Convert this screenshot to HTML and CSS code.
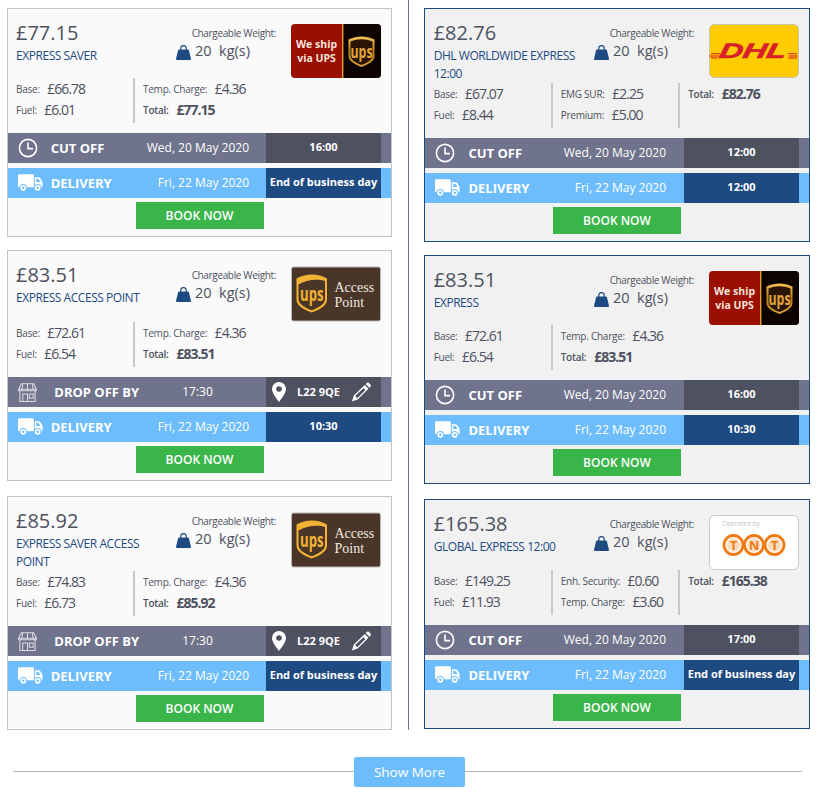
FILE: index.html
```html
<!DOCTYPE html>
<html lang="en">
<head>
<meta charset="utf-8">
<title>Quotes</title>
<link rel="stylesheet" href="styles.css">
</head>
<body>
<svg class="defs" aria-hidden="true">
  <defs>
    <linearGradient id="gold" x1="0" y1="0" x2="0" y2="1"><stop offset="0" stop-color="#f3c25a"/><stop offset=".5" stop-color="#b97a16"/><stop offset="1" stop-color="#e0a63c"/></linearGradient>
    <symbol id="i-clock" viewBox="0 0 20 20"><circle cx="10" cy="10" r="8.6" fill="none" stroke="#fff" stroke-width="1.6"/><path d="M10 4.5V10.6H15" fill="none" stroke="#fff" stroke-width="1.6"/></symbol>
    <symbol id="i-truck" viewBox="0 0 26 18"><path d="M1.5 0H15a1.5 1.5 0 0 1 1.5 1.5V13.5H1.5A1.500 1.500 0 0 1 0 12V1.500A1.500 1.500 0 0 1 1.500 0Z" fill="#fff"/><path d="M17.500 3H21.500Q22.500 3 23 3.800L25.500 7.500V13.500H17.500Z" fill="#fff"/><path d="M19 4.500H21L23.600 8H19Z" fill="#6dbdfd"/><circle cx="5.500" cy="14" r="3.900" fill="#6dbdfd"/><circle cx="5.500" cy="14" r="3" fill="#fff"/><circle cx="5.500" cy="14" r="1.300" fill="#6dbdfd"/><circle cx="20.500" cy="14" r="3.900" fill="#6dbdfd"/><circle cx="20.500" cy="14" r="3" fill="#fff"/><circle cx="20.500" cy="14" r="1.300" fill="#6dbdfd"/></symbol>
    <symbol id="i-shop" viewBox="0 0 20 20"><g fill="none" stroke="#dcdde3" stroke-width="1.1"><path d="M3.500 .8H16.500L19.300 6.500V8.200H.7V6.500Z"/><path d="M.7 6.500H19.300M5 .8 3.800 8.200M10 .8V8.200M15 .8 16.200 8.200"/><path d="M2 8.500V19.400H18V8.500"/><path d="M5 19.400V11.500H10V19.400M12 11.500H16V16H12Z"/></g></symbol>
    <symbol id="i-pin" viewBox="0 0 14 20"><path fill-rule="evenodd" d="M7 0A7 7 0 0 0 0 7C0 11 4.500 16.500 7 20 9.500 16.500 14 11 14 7A7 7 0 0 0 7 0ZM7 4.200A2.800 2.800 0 1 1 7 9.800 2.800 2.800 0 0 1 7 4.200Z" fill="#fff"/></symbol>
    <symbol id="i-pencil" viewBox="0 0 20 20"><g fill="#fff"><path d="M14.300 1.600 16 .3C16.600-.1 17.200 0 17.700.4L19.500 2.200C20 2.800 20 3.400 19.600 3.900L18.300 5.500Z"/><path fill-rule="evenodd" d="M13.300 2.600 17.300 6.600 6 18 0 20 1.800 13.900ZM3.400 14.300 5.600 16.500 14 8 12 6Z"/></g></symbol>
    <symbol id="i-bag" viewBox="0 0 15 15"><path d="M3 4.500H12Q12.600 4.500 12.800 5L15 13.800Q15 15 14 15H1Q0 15 0 13.800L2.200 5Q2.400 4.500 3 4.500Z" fill="#1e4a82"/><path d="M4.800 5.500V3C4.800-.3 10.200-.3 10.200 3V5.500" fill="none" stroke="#1e4a82" stroke-width="1.200"/></symbol>
    <symbol id="l-ups" viewBox="0 0 90 54"><rect width="90" height="54" rx="4" fill="#9b0f00"/><path d="M52 0H86a4 4 0 0 1 4 4V50a4 4 0 0 1-4 4H52Z" fill="#0d0300"/><rect x="51" width="1.400" height="54" fill="#d9a232"/><text x="25.500" y="24" class="lg-ship">We ship</text><text x="25.500" y="37.500" class="lg-ship">via UPS</text><path d="M57.500 15.500C66 11.500 75 11.500 83.500 15.500V32C83.500 38 75 41 70.500 43 66 41 57.500 38 57.500 32Z" fill="url(#gold)"/><path d="M59.500 17.500C67 14.500 74 14.500 81.500 17.500V31.500C81.500 36.500 75 39 70.500 41 66 39 59.500 36.500 59.500 31.500Z" fill="#2a1403"/><text x="59.500" y="34" class="lg-ups-g" textLength="22" lengthAdjust="spacingAndGlyphs">ups</text></symbol>
    <symbol id="l-access" viewBox="0 0 90 55"><rect x=".5" y=".5" width="89" height="54" rx="2" fill="#4a3628" stroke="#b9b5b1"/><path d="M5.500 12C15 6.500 27 6.500 36 12V33C36 40 27 43.500 20.700 46 14.500 43.500 5.500 40 5.500 33Z" fill="#f2b233"/><path d="M7.500 18C15 13 27 12 34 14.500V32.500C34 38.500 26 41.500 20.700 43.800 15.500 41.500 7.500 38.500 7.500 32.500Z" fill="#4a3628"/><text x="9" y="34.500" class="lg-ups-b" textLength="23.500" lengthAdjust="spacingAndGlyphs">ups</text><text x="43.500" y="25.500" class="lg-ap">Access</text><text x="43.500" y="40" class="lg-ap">Point</text></symbol>
    <symbol id="l-dhl" viewBox="0 0 90 54"><rect x=".5" y=".5" width="89" height="53" rx="5" fill="#fecc00" stroke="#c9c6ae"/><g fill="#d81f2a"><path d="M2 29.200H11V30.200H2ZM0 31.400H10V32.400H0ZM2 33.600H8.500V34.600H2ZM79 29.200H88V30.200H79ZM80 31.400H88.500V32.400H80ZM79 33.600H88V34.600H79Z"/></g><text x="10" y="34.500" class="lg-dhl" textLength="67" lengthAdjust="spacingAndGlyphs" transform="skewX(-12) translate(6.500 0)">DHL</text></symbol>
    <symbol id="l-tnt" viewBox="0 0 90 55"><rect x=".5" y=".5" width="89" height="54" rx="5" fill="#fff" stroke="#c9c9c9"/><text x="13" y="11" class="lg-op">Operated by</text><g fill="#fff" stroke="#ee7a10" stroke-width="2.800"><circle cx="24.500" cy="30" r="9.500"/><circle cx="45" cy="30" r="9.500"/><circle cx="65.500" cy="30" r="9.500"/></g><g fill="#fbdcbf"><circle cx="24.500" cy="30" r="6.800"/><circle cx="45" cy="30" r="6.800"/><circle cx="65.500" cy="30" r="6.800"/></g><text x="24.500" y="34.500" class="lg-tnt">T</text><text x="45" y="34.500" class="lg-tnt">N</text><text x="65.500" y="34.500" class="lg-tnt">T</text></symbol>
  </defs>
</svg>

<main class="results">
  <section class="col">
    <article class="card">
      <header class="head">
        <div class="title"><div class="price">£77.15</div><div class="service">EXPRESS SAVER</div></div>
        <div class="weight"><div class="weight-label">Chargeable Weight:</div><div class="weight-val"><svg class="bag"><use href="#i-bag"/></svg><span>20</span><span>kg(s)</span></div></div>
        <svg class="logo logo-54"><use href="#l-ups"/></svg>
      </header>
      <div class="charges">
        <div class="ccol c1"><p><span class="lbl">Base:</span><b>£66.78</b></p><p><span class="lbl">Fuel:</span><b>£6.01</b></p></div>
        <div class="ccol"><p><span class="lbl">Temp. Charge:</span><b>£4.36</b></p><p class="total"><span class="lbl">Total:</span><b>£77.15</b></p></div>
      </div>
      <div class="bar grey"><svg class="ico clock"><use href="#i-clock"/></svg><span class="name">CUT OFF</span><span class="date">Wed, 20 May 2020</span><span class="cell">16:00</span></div>
      <div class="bar sky"><svg class="ico truck"><use href="#i-truck"/></svg><span class="name">DELIVERY</span><span class="date">Fri, 22 May 2020</span><span class="cell">End of business day</span></div>
      <div class="cta"><a class="book">BOOK NOW</a></div>
    </article>

    <article class="card">
      <header class="head">
        <div class="title"><div class="price">£83.51</div><div class="service">EXPRESS ACCESS POINT</div></div>
        <div class="weight"><div class="weight-label">Chargeable Weight:</div><div class="weight-val"><svg class="bag"><use href="#i-bag"/></svg><span>20</span><span>kg(s)</span></div></div>
        <svg class="logo logo-56"><use href="#l-access"/></svg>
      </header>
      <div class="charges">
        <div class="ccol c1"><p><span class="lbl">Base:</span><b>£72.61</b></p><p><span class="lbl">Fuel:</span><b>£6.54</b></p></div>
        <div class="ccol"><p><span class="lbl">Temp. Charge:</span><b>£4.36</b></p><p class="total"><span class="lbl">Total:</span><b>£83.51</b></p></div>
      </div>
      <div class="bar grey"><svg class="ico shop"><use href="#i-shop"/></svg><span class="name">DROP OFF BY</span><span class="time">17:30</span><span class="cell point"><svg class="pin"><use href="#i-pin"/></svg><span>L22 9QE</span><svg class="pencil"><use href="#i-pencil"/></svg></span></div>
      <div class="bar sky"><svg class="ico truck"><use href="#i-truck"/></svg><span class="name">DELIVERY</span><span class="date">Fri, 22 May 2020</span><span class="cell">10:30</span></div>
      <div class="cta"><a class="book">BOOK NOW</a></div>
    </article>

    <article class="card spaced">
      <header class="head">
        <div class="title"><div class="price">£85.92</div><div class="service">EXPRESS SAVER ACCESS POINT</div></div>
        <div class="weight"><div class="weight-label">Chargeable Weight:</div><div class="weight-val"><svg class="bag"><use href="#i-bag"/></svg><span>20</span><span>kg(s)</span></div></div>
        <svg class="logo logo-56"><use href="#l-access"/></svg>
      </header>
      <div class="charges">
        <div class="ccol c1"><p><span class="lbl">Base:</span><b>£74.83</b></p><p><span class="lbl">Fuel:</span><b>£6.73</b></p></div>
        <div class="ccol"><p><span class="lbl">Temp. Charge:</span><b>£4.36</b></p><p class="total"><span class="lbl">Total:</span><b>£85.92</b></p></div>
      </div>
      <div class="bar grey"><svg class="ico shop"><use href="#i-shop"/></svg><span class="name">DROP OFF BY</span><span class="time">17:30</span><span class="cell point"><svg class="pin"><use href="#i-pin"/></svg><span>L22 9QE</span><svg class="pencil"><use href="#i-pencil"/></svg></span></div>
      <div class="bar sky"><svg class="ico truck"><use href="#i-truck"/></svg><span class="name">DELIVERY</span><span class="date">Fri, 22 May 2020</span><span class="cell">End of business day</span></div>
      <div class="cta"><a class="book">BOOK NOW</a></div>
    </article>
  </section>

  <section class="col col-alt">
    <article class="card alt">
      <header class="head">
        <div class="title"><div class="price">£82.76</div><div class="service">DHL WORLDWIDE EXPRESS 12:00</div></div>
        <div class="weight"><div class="weight-label">Chargeable Weight:</div><div class="weight-val"><svg class="bag"><use href="#i-bag"/></svg><span>20</span><span>kg(s)</span></div></div>
        <svg class="logo logo-54"><use href="#l-dhl"/></svg>
      </header>
      <div class="charges">
        <div class="ccol c1"><p><span class="lbl">Base:</span><b>£67.07</b></p><p><span class="lbl">Fuel:</span><b>£8.44</b></p></div>
        <div class="ccol c2"><p><span class="lbl">EMG SUR:</span><b>£2.25</b></p><p><span class="lbl">Premium:</span><b>£5.00</b></p></div>
        <div class="ccol c3"><p class="total"><span class="lbl">Total:</span><b>£82.76</b></p></div>
      </div>
      <div class="bar grey"><svg class="ico clock"><use href="#i-clock"/></svg><span class="name">CUT OFF</span><span class="date">Wed, 20 May 2020</span><span class="cell">12:00</span></div>
      <div class="bar sky"><svg class="ico truck"><use href="#i-truck"/></svg><span class="name">DELIVERY</span><span class="date">Fri, 22 May 2020</span><span class="cell">12:00</span></div>
      <div class="cta"><a class="book">BOOK NOW</a></div>
    </article>

    <article class="card alt">
      <header class="head">
        <div class="title"><div class="price">£83.51</div><div class="service">EXPRESS</div></div>
        <div class="weight"><div class="weight-label">Chargeable Weight:</div><div class="weight-val"><svg class="bag"><use href="#i-bag"/></svg><span>20</span><span>kg(s)</span></div></div>
        <svg class="logo logo-54"><use href="#l-ups"/></svg>
      </header>
      <div class="charges">
        <div class="ccol c1"><p><span class="lbl">Base:</span><b>£72.61</b></p><p><span class="lbl">Fuel:</span><b>£6.54</b></p></div>
        <div class="ccol"><p><span class="lbl">Temp. Charge:</span><b>£4.36</b></p><p class="total"><span class="lbl">Total:</span><b>£83.51</b></p></div>
      </div>
      <div class="bar grey"><svg class="ico clock"><use href="#i-clock"/></svg><span class="name">CUT OFF</span><span class="date">Wed, 20 May 2020</span><span class="cell">16:00</span></div>
      <div class="bar sky"><svg class="ico truck"><use href="#i-truck"/></svg><span class="name">DELIVERY</span><span class="date">Fri, 22 May 2020</span><span class="cell">10:30</span></div>
      <div class="cta"><a class="book">BOOK NOW</a></div>
    </article>

    <article class="card alt spaced">
      <header class="head">
        <div class="title"><div class="price">£165.38</div><div class="service">GLOBAL EXPRESS 12:00</div></div>
        <div class="weight"><div class="weight-label">Chargeable Weight:</div><div class="weight-val"><svg class="bag"><use href="#i-bag"/></svg><span>20</span><span>kg(s)</span></div></div>
        <svg class="logo logo-55"><use href="#l-tnt"/></svg>
      </header>
      <div class="charges">
        <div class="ccol c1"><p><span class="lbl">Base:</span><b>£149.25</b></p><p><span class="lbl">Fuel:</span><b>£11.93</b></p></div>
        <div class="ccol c2"><p><span class="lbl">Enh. Security:</span><b>£0.60</b></p><p><span class="lbl">Temp. Charge:</span><b>£3.60</b></p></div>
        <div class="ccol c3"><p class="total"><span class="lbl">Total:</span><b>£165.38</b></p></div>
      </div>
      <div class="bar grey"><svg class="ico clock"><use href="#i-clock"/></svg><span class="name">CUT OFF</span><span class="date">Wed, 20 May 2020</span><span class="cell">17:00</span></div>
      <div class="bar sky"><svg class="ico truck"><use href="#i-truck"/></svg><span class="name">DELIVERY</span><span class="date">Fri, 22 May 2020</span><span class="cell">End of business day</span></div>
      <div class="cta"><a class="book">BOOK NOW</a></div>
    </article>
  </section>
</main>

<div class="more"><span class="rule rule-left"></span><a class="more-btn">Show More</a><span class="rule"></span></div>
</body>
</html>
```

FILE: styles.css
```css
* { box-sizing: border-box; }
html, body { margin: 0; padding: 0; background: #fff; }
body { font-family: "Open Sans", sans-serif; color: #4d5160; height: 800px; overflow: hidden; }
.defs { position: absolute; width: 0; height: 0; overflow: hidden; }

.results { display: flex; align-items: flex-start; height: 730px; padding: 8px 0 0 7px; background: linear-gradient(#6f738c, #6f738c) 408px 0 / 1px 730px no-repeat; }
.col { width: 385px; display: flex; flex-direction: column; gap: 13px; }
.col-alt { width: 386px; margin-left: 32px; }

.card { border: 1px solid #c4c4c4; background: #fafafa; --inset: 8px; --dategap: 17px; }
.card.alt { border-color: #1e4a82; background: #f1f1f1; --inset: 8.7px; --dategap: 18px; }
.card.spaced { margin-top: 2px; }

.head { display: flex; align-items: flex-start; padding: 0 10px 0 var(--inset); }
.title { flex: 1; min-width: 0; padding-top: 9px; padding-right: 8px; }
.price { font-size: 20px; line-height: 29px; color: #4d5160; }
.service { font-size: 12px; line-height: 18px; letter-spacing: -.45px; color: #1e4a82; }
.weight { width: 100px; margin-right: 15px; padding-top: 17px; }
.weight-label { font-size: 10px; line-height: 14px; letter-spacing: -.35px; text-align: right; white-space: nowrap; }
.weight-val { display: flex; align-items: center; gap: 4px; margin-top: 1px; font-size: 14.5px; line-height: 20px; }
.weight-val span + span { margin-left: 3.5px; }
.bag { width: 15px; height: 15px; margin-top: 2px; }
.logo { width: 90px; flex: none; margin-top: 15px; display: block; }
.logo-54 { height: 54px; }
.logo-55 { height: 55px; }
.logo-56 { height: 56px; }

.lg-ship { font: 700 10.5px "Open Sans", sans-serif; fill: #f3e4dc; text-anchor: middle; }
.lg-ups-g { font: 700 18px "Open Sans", sans-serif; fill: #e0a63c; }
.lg-ups-b { font: 700 20px "Open Sans", sans-serif; fill: #f2b233; }
.lg-ap { font: 14px "Liberation Serif", serif; fill: #eee7df; }
.lg-dhl { font: italic 700 21px "Liberation Sans", sans-serif; fill: #d81f2a; stroke: #d81f2a; stroke-width: .6px; }
.lg-op { font: 6.5px "Open Sans", sans-serif; fill: #c4c4c4; }
.lg-tnt { font: 700 12.5px "Open Sans", sans-serif; fill: #ee7a10; text-anchor: middle; }

.charges { display: flex; height: 45px; margin-bottom: 10px; padding-left: var(--inset); }
.ccol.c1 { width: 119px; border-right: 2px solid #c8c8c8; margin-right: 8px; flex: none; }
.ccol.c2 { width: 119.5px; border-right: 2px solid #c8c8c8; margin-right: 8px; flex: none; }
.ccol p { margin: 0; display: flex; align-items: center; height: 21px; white-space: nowrap; }
.lbl { font-size: 10px; letter-spacing: -.25px; margin-right: 7.5px; }
.ccol b { font-weight: 400; font-size: 14px; letter-spacing: -1px; }
.total .lbl { font-weight: 600; margin-right: 8px; }
.total b { font-weight: 700; }

.bar { display: flex; align-items: stretch; height: 30px; color: #fff; }
.bar + .bar { margin-top: 5px; }
.grey { background: #6f738c; }
.sky { background: #6dbdfd; }
.ico { flex: none; align-self: center; display: block; }
.clock { width: 20px; height: 20px; margin-left: calc(var(--inset) + 1.7px); margin-right: 13px; }
.truck { width: 25px; height: 18px; margin-left: calc(var(--inset) + 1.7px); margin-right: 8px; }
.shop { width: 19px; height: 19px; margin-left: calc(var(--inset) + 1.7px); margin-right: 17.6px; }
.name { font-size: 13px; font-weight: 700; line-height: 31px; white-space: nowrap; }
.date { flex: 1; text-align: right; font-size: 12px; line-height: 29px; margin-right: var(--dategap); white-space: nowrap; }
.time { flex: 1; font-size: 12px; line-height: 29px; padding-left: 43px; }
.cell { flex: none; width: 115px; margin-right: 10px; text-align: center; font-size: 11px; font-weight: 700; line-height: 28px; white-space: nowrap; }
.grey .cell { background: #4d5160; }
.sky .cell { background: #1e4a82; }
.point { display: flex; align-items: center; text-align: left; padding-left: 6px; }
.pin { width: 14px; height: 20px; margin-right: 11px; }
.pencil { width: 19px; height: 20px; margin-left: 12px; }

.cta { padding: 4px 0 7px; display: flex; justify-content: center; }
.book { display: block; width: 128px; height: 27px; background: #3ab54a; color: #fff; text-align: center; font-size: 12px; font-weight: 600; line-height: 27px; }

.more { display: flex; align-items: center; margin: 27px 16px 0 13px; height: 30px; }
.rule { flex: 1; height: 1px; background: #b3b3b3; margin-top: -2px; }
.rule-left { flex: none; width: 341px; }
.more-btn { display: block; width: 111px; height: 30px; background: #6dbdfd; color: #fff; border-radius: 2px; text-align: center; font-size: 13.5px; line-height: 30px; }
```
